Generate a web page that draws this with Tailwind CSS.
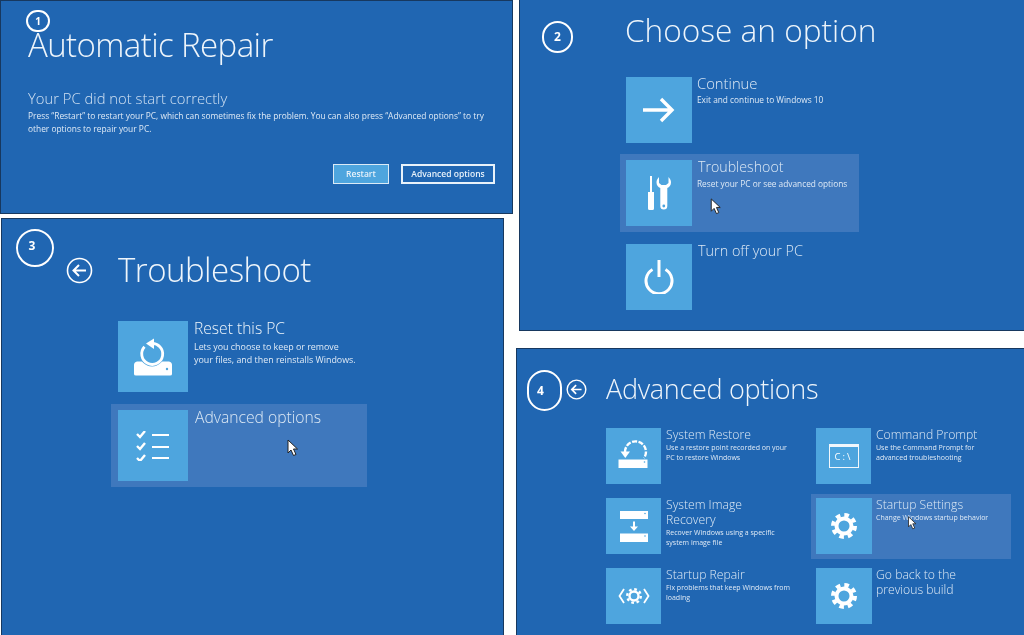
<!DOCTYPE html>
<html lang="en">
<head>
    <meta charset="UTF-8">
    <title>Windows Automatic Repair steps</title>
    <script src="https://cdn.jsdelivr.net/npm/@tailwindcss/browser@4"></script>
</head>
<body class="bg-white overflow-hidden">
<div class="flex w-[1024px] h-[635px] bg-white text-[#eef5fb] font-['Open_Sans',sans-serif] font-light blur-[0.4px]">

    <!-- Left column -->
    <div class="w-[516px] flex flex-col">
        <!-- 1: Automatic Repair -->
        <section class="relative w-[513px] h-[214px] bg-[#2066b2] border border-[#17385f] pl-[27px] pt-[19px]">
            <div class="absolute left-[25px] top-[9px] w-[24px] h-[22px] rounded-full border-2 border-white flex items-center justify-center text-[10px] font-bold text-white">1</div>
            <h1 class="text-[33px] leading-[50px] tracking-[-0.6px]">Automatic Repair</h1>
            <h2 class="mt-[17px] text-[14.8px] leading-[22px] text-[#cfe0f2]">Your PC did not start correctly</h2>
            <p class="mt-[1px] w-[470px] text-[8.4px] leading-[12.5px] font-normal text-[#dfeaf6]">Press “Restart” to restart your PC, which can sometimes fix the problem. You can also press “Advanced options” to try other options to repair your PC.</p>
            <div class="flex justify-end gap-[12px] mt-[29px] pr-[17px]">
                <div class="w-[56px] h-[20px] bg-[#4ea5de] border border-[#dbeaf6] flex items-center justify-center text-[8.5px] font-semibold text-[#e8f2fa]">Restart</div>
                <div class="w-[94px] h-[20px] border-2 border-[#e8f2fa] flex items-center justify-center text-[8.5px] font-semibold text-[#e8f2fa]">Advanced options</div>
            </div>
        </section>

        <!-- 3: Troubleshoot -->
        <section class="relative mt-[4px] ml-[1px] w-[503px] flex-1 bg-[#2066b2] border-l border-t border-r border-[#17385f] pt-[26px]">
            <div class="absolute left-[14px] top-[10px] w-[38px] h-[38px] rounded-full border-2 border-white flex items-center justify-center text-[12px] font-bold text-white pb-[4px] pr-[6px]">3</div>
            <div class="flex items-center h-[50px]">
                <svg class="ml-[64px] w-[27px] h-[27px]" viewBox="0 0 27 27" fill="none" stroke="#fff" stroke-width="1.6"><circle cx="13.5" cy="13.5" r="12"/><path d="M20 13.5H8M13 8l-5.500 5.500L13 19" stroke-width="2"/></svg>
                <h1 class="ml-[25px] text-[33px] leading-[50px] tracking-[-0.5px]">Troubleshoot</h1>
            </div>
            <div class="ml-[109px] mt-[20px] w-[256px] flex flex-col gap-[6px]">
                <div class="flex pl-[7px] pr-[7px] py-[6px]">
                    <div class="w-[70px] h-[71px] shrink-0 bg-[#4ea5de] flex items-center justify-center">
                        <svg class="w-[40px] h-[40px]" viewBox="0 0 40 40" fill="none">
                            <path d="M1 28 Q1 25 4 24.500 H36 Q39 25 39 28 V37 Q39 38.500 37 38.500 H3 Q1 38.500 1 37Z" fill="#fff"/>
                            <circle cx="19" cy="17" r="12.500" fill="#4ea5de"/>
                            <path d="M18 6.500 A10.500 10.500 0 1 1 11.500 9.800" stroke="#fff" stroke-width="2.800"/>
                            <path d="M21 1.500 L13 6.500 L21 12Z" fill="#fff"/>
                            <circle cx="34" cy="32" r="1.200" fill="#4ea5de"/>
                        </svg>
                    </div>
                    <div class="ml-[6px]">
                        <h3 class="text-[15.6px] leading-[20px] mt-[-3px]">Reset this PC</h3>
                        <p class="mt-[3px] w-[162px] text-[8.9px] leading-[12.7px] font-normal text-[#dfeaf6]">Lets you choose to keep or remove<br>your files, and then reinstalls Windows.</p>
                    </div>
                </div>
                <div class="relative flex bg-[#3f78bd] pl-[7px] pr-[7px] py-[6px]">
                    <div class="w-[70px] h-[71px] shrink-0 bg-[#4ea5de] flex items-center justify-center">
                        <svg class="w-[34px] h-[30px]" viewBox="0 0 34 30" fill="none" stroke="#fff">
                            <path d="M1 5l3 3 5-6M1 17l3 3 5-6M1 29l3 3 5-6" stroke-width="2.400" transform="translate(0 -2)"/>
                            <path d="M16 4h17M16 16h17M16 27h17" stroke-width="1.800"/>
                        </svg>
                    </div>
                    <h3 class="ml-[7px] text-[15.7px] leading-[20px] mt-[-3px] text-[#dde9f5]">Advanced options</h3>
                    <svg class="absolute left-[176px] top-[35px] w-[11px] h-[18px]" viewBox="0 0 11 18"><path d="M1 1v13l3-3 2.500 5.500 2.500-1L6.500 10H10.500z" fill="#fff" stroke="#222" stroke-width="1"/></svg>
                </div>
            </div>
        </section>
    </div>

    <!-- Right column -->
    <div class="flex-1 flex flex-col">
        <!-- 2: Choose an option -->
        <section class="relative ml-[3px] h-[331px] bg-[#2066b2] border-l border-b border-[#17385f] pt-[6px]">
            <div class="absolute left-[22px] top-[21px] w-[31px] h-[32px] rounded-full border-2 border-white flex items-center justify-center text-[12px] font-bold text-white">2</div>
            <h1 class="ml-[105px] text-[31.6px] leading-[48px]">Choose an option</h1>
            <div class="ml-[100px] mt-[17px] w-[239px] flex flex-col gap-[5px]">
                <div class="flex p-[6px]">
                    <div class="w-[66px] h-[66px] shrink-0 bg-[#4ea5de] flex items-center justify-center">
                        <svg class="w-[32px] h-[26px]" viewBox="0 0 32 26" fill="none" stroke="#fff" stroke-width="3.400"><path d="M0 13h29M18 2l11 11-11 11"/></svg>
                    </div>
                    <div class="ml-[5px]">
                        <h3 class="text-[14.8px] leading-[20px] mt-[-4px] text-[#dde9f5]">Continue</h3>
                        <p class="mt-[1px] text-[8.3px] leading-[12px] font-normal text-[#dfeaf6]">Exit and continue to Windows 10</p>
                    </div>
                </div>
                <div class="relative flex bg-[#3f78bd] p-[6px]">
                    <div class="w-[66px] h-[66px] shrink-0 bg-[#4ea5de] flex items-center justify-center">
                        <svg class="w-[24px] h-[34px]" viewBox="0 0 24 34" fill="#fff">
                            <path d="M3 0h2v16H3zM1 16h6v16.500a1.500 1.500 0 0 1-1.500 1.500h-3A1.500 1.500 0 0 1 1 32.500z"/>
                            <path d="M12 1c-1.800 2-2.500 3.500-2.500 5.500 0 3 1.800 4.500 3.800 5.500v18a3.500 3.500 0 0 0 7 0V12c2-1 3.700-2.500 3.700-5.500 0-2-.7-3.500-2.500-5.500v6l-2.500 2h-4.500l-2.500-2z"/>
                            <circle cx="16.800" cy="30" r="1.400" fill="#4ea5de"/>
                        </svg>
                    </div>
                    <div class="ml-[5px]">
                        <h3 class="text-[14.2px] leading-[20px] mt-[-3px] ml-[1px] text-[#dde9f5]">Troubleshoot</h3>
                        <p class="mt-[1px] text-[8.3px] leading-[12px] font-normal text-[#dfeaf6]">Reset your PC or see advanced options</p>
                    </div>
                    <svg class="absolute left-[90px] top-[44px] w-[11px] h-[17px]" viewBox="0 0 11 18"><path d="M1 1v13l3-3 2.500 5.500 2.500-1L6.500 10H10.500z" fill="#fff" stroke="#222" stroke-width="1"/></svg>
                </div>
                <div class="flex p-[6px] mt-[1px]">
                    <div class="w-[66px] h-[66px] shrink-0 bg-[#4ea5de] flex items-center justify-center">
                        <svg class="w-[30px] h-[34px]" viewBox="0 0 30 34" fill="none" stroke="#fff" stroke-width="3"><path d="M8.500 9.500a13 13 0 1 0 13 0"/><path d="M15 0v17"/></svg>
                    </div>
                    <h3 class="ml-[6px] text-[14.4px] leading-[20px] mt-[-3px] text-[#dde9f5]">Turn off your PC</h3>
                </div>
            </div>
        </section>

        <!-- 4: Advanced options -->
        <section class="relative mt-[17px] flex-1 bg-[#2066b2] border-l border-t border-[#17385f] pt-[20px]">
            <div class="absolute left-[10px] top-[21px] w-[35px] h-[41px] rounded-full border-2 border-white flex items-center justify-center text-[12px] font-bold text-white pr-[8px]">4</div>
            <div class="flex items-center h-[40px]">
                <svg class="ml-[49px] w-[21px] h-[21px]" viewBox="0 0 27 27" fill="none" stroke="#fff" stroke-width="1.800"><circle cx="13.500" cy="13.500" r="12"/><path d="M20 13.500H8M13 8l-5.500 5.500L13 19" stroke-width="2.200"/></svg>
                <h1 class="ml-[19px] text-[27px] leading-[40px] tracking-[-0.3px]">Advanced options</h1>
            </div>
            <div class="ml-[84px] mt-[15px] grid grid-cols-[200px_200px] gap-x-[10px] gap-y-[5px]">
                <div class="flex h-[65px] px-[5px] pt-[4px]">
                    <div class="w-[55px] h-[56px] shrink-0 bg-[#4ea5de]">
                        <svg class="w-full h-full" viewBox="0 0 55 56" fill="none">
                            <path d="M19 24A10.500 10.500 0 1 1 38 30" stroke="#fff" stroke-width="2.400" stroke-dasharray="5 1.500"/>
                            <path d="M14.500 23.500h9.500l-4.700 6.500z" fill="#fff"/>
                            <path d="M12.500 31.500h29v8.500h-29z" fill="#fff"/>
                            <circle cx="38.500" cy="34" r="0.800" fill="#4ea5de"/>
                        </svg>
                    </div>
                    <div class="ml-[5px]">
                        <h3 class="text-[12.2px] leading-[15px] mt-[-1px] text-[#dde9f5]">System Restore</h3>
                        <p class="mt-[1px] text-[7px] leading-[10px] font-normal text-[#dfeaf6]">Use a restore point recorded on your PC to restore Windows</p>
                    </div>
                </div>
                <div class="flex h-[65px] px-[5px] pt-[4px]">
                    <div class="w-[55px] h-[56px] shrink-0 bg-[#4ea5de] flex items-center justify-center">
                        <div class="w-[30px] h-[24px] border border-[#f1f7fc] border-t-[3px] flex items-center justify-center text-[9.5px] leading-none font-normal tracking-[2px] text-white">C:\</div>
                    </div>
                    <div class="ml-[5px]">
                        <h3 class="text-[12.2px] leading-[15px] mt-[-1px] text-[#dde9f5]">Command Prompt</h3>
                        <p class="mt-[1px] text-[7px] leading-[10px] font-normal text-[#dfeaf6]">Use the Command Prompt for advanced troubleshooting</p>
                    </div>
                </div>
                <div class="flex h-[65px] px-[5px] pt-[4px]">
                    <div class="w-[55px] h-[56px] shrink-0 bg-[#4ea5de] flex items-center justify-center">
                        <svg class="w-[30px] h-[31px]" viewBox="0 0 30 31" fill="#fff">
                            <path d="M1 0h28v8H1zM1 22.500h28v8.500H1z"/>
                            <path d="M14 10.500h2v5h3l-4 4.500-4-4.500h3z"/>
                            <circle cx="26" cy="2.500" r="0.800" fill="#4ea5de"/><circle cx="26" cy="25" r="0.800" fill="#4ea5de"/>
                        </svg>
                    </div>
                    <div class="ml-[5px]">
                        <h3 class="w-[90px] text-[12.2px] leading-[15px] mt-[-1px] text-[#dde9f5]">System Image Recovery</h3>
                        <p class="mt-[1px] text-[7px] leading-[10px] font-normal text-[#dfeaf6]">Recover Windows using a specific system image file</p>
                    </div>
                </div>
                <div class="relative flex h-[65px] bg-[#3f78bd] px-[5px] pt-[4px]">
                    <div class="w-[56px] h-[56px] shrink-0 bg-[#4ea5de] flex items-center justify-center">
                        <svg class="w-[26px] h-[26px]" viewBox="0 0 26 26" fill="none" stroke="#fff"><circle cx="13" cy="13" r="7.500" stroke-width="4"/><circle cx="13" cy="13" r="11" stroke-width="4" stroke-dasharray="4.600 4.040"/></svg>
                    </div>
                    <div class="ml-[4px]">
                        <h3 class="text-[12.2px] leading-[15px] mt-[-1px] text-[#dde9f5]">Startup Settings</h3>
                        <p class="mt-[1px] text-[7px] leading-[10px] font-normal text-[#dfeaf6]">Change Windows startup behavior</p>
                    </div>
                    <svg class="absolute left-[96px] top-[22px] w-[10px] h-[14px]" viewBox="0 0 11 18"><path d="M1 1v13l3-3 2.500 5.500 2.500-1L6.500 10H10.500z" fill="#fff" stroke="#222" stroke-width="1"/></svg>
                </div>
                <div class="flex h-[65px] px-[5px] pt-[4px]">
                    <div class="w-[55px] h-[56px] shrink-0 bg-[#4ea5de] flex items-center justify-center">
                        <svg class="w-[32px] h-[18px]" viewBox="0 0 32 18" fill="none" stroke="#fff"><path d="M6 2L1.500 9 6 16M26 2l4.500 7L26 16" stroke-width="1.800"/><circle cx="16" cy="9" r="4.500" stroke-width="2.400"/><circle cx="16" cy="9" r="6.800" stroke-width="2.400" stroke-dasharray="2.700 2.640"/></svg>
                    </div>
                    <div class="ml-[5px]">
                        <h3 class="text-[12.2px] leading-[15px] mt-[-1px] text-[#dde9f5]">Startup Repair</h3>
                        <p class="mt-[1px] text-[7px] leading-[10px] font-normal text-[#dfeaf6]">Fix problems that keep Windows from loading</p>
                    </div>
                </div>
                <div class="flex h-[65px] px-[5px] pt-[4px]">
                    <div class="w-[56px] h-[56px] shrink-0 bg-[#4ea5de] flex items-center justify-center">
                        <svg class="w-[26px] h-[26px]" viewBox="0 0 26 26" fill="none" stroke="#fff"><circle cx="13" cy="13" r="7.500" stroke-width="4"/><circle cx="13" cy="13" r="11" stroke-width="4" stroke-dasharray="4.600 4.040"/></svg>
                    </div>
                    <h3 class="ml-[4px] text-[12.2px] leading-[15px] mt-[-1px] text-[#dde9f5] w-[100px]">Go back to the previous build</h3>
                </div>
            </div>
        </section>
    </div>
</div>
</body>
</html>
